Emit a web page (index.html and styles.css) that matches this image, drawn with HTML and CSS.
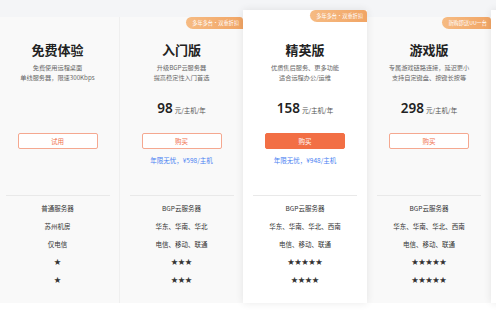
FILE: index.html
```html
<!DOCTYPE html>
<html lang="zh-CN">
<head>
<meta charset="utf-8">
<title>价格方案</title>
<link rel="stylesheet" href="styles.css">
</head>
<body>
<div class="page">
  <div class="topband"></div>
  <div class="row">
    <div class="card">
      <div class="title">免费体验</div>
      <div class="desc">免费使用远程桌面<br>单线服务器，限速300Kbps</div>
      <div class="price"></div>
      <div class="btn">试用</div>
      <div class="promo"></div>
      <div class="divider"></div>
      <div class="features">
        <div class="feat">普通服务器</div>
        <div class="feat">苏州机房</div>
        <div class="feat">仅电信</div>
        <div class="feat stars">★</div>
        <div class="feat stars">★</div>
      </div>
    </div>
    <div class="card">
      <div class="badge">多年多台·双重折扣</div>
      <div class="title">入门版</div>
      <div class="desc">升级BGP云服务器<br>提高稳定性入门首选</div>
      <div class="price"><span class="num">98</span><span class="unit">元/主机/年</span></div>
      <div class="btn">购买</div>
      <div class="promo">年限无忧，¥598/主机</div>
      <div class="divider"></div>
      <div class="features">
        <div class="feat">BGP云服务器</div>
        <div class="feat">华东、华南、华北</div>
        <div class="feat">电信、移动、联通</div>
        <div class="feat stars">★★★</div>
        <div class="feat stars">★★★</div>
      </div>
    </div>
    <div class="card card-active">
      <div class="badge">多年多台·双重折扣</div>
      <div class="title">精英版</div>
      <div class="desc">优质售后服务、更多功能<br>适合远程办公/运维</div>
      <div class="price"><span class="num">158</span><span class="unit">元/主机/年</span></div>
      <div class="btn btn-fill">购买</div>
      <div class="promo">年限无忧，¥948/主机</div>
      <div class="divider"></div>
      <div class="features">
        <div class="feat">BGP云服务器</div>
        <div class="feat">华东、华南、华北、西南</div>
        <div class="feat">电信、移动、联通</div>
        <div class="feat stars">★★★★★</div>
        <div class="feat stars">★★★★</div>
      </div>
    </div>
    <div class="card">
      <div class="badge">新购即送UU一台</div>
      <div class="title">游戏版</div>
      <div class="desc">专属游戏链路连接，延迟更小<br>支持自定键盘、按键长按等</div>
      <div class="price"><span class="num">298</span><span class="unit">元/主机/年</span></div>
      <div class="btn">购买</div>
      <div class="promo"></div>
      <div class="divider"></div>
      <div class="features">
        <div class="feat">BGP云服务器</div>
        <div class="feat">华东、华南、华北、西南</div>
        <div class="feat">电信、移动、联通</div>
        <div class="feat stars">★★★★★</div>
        <div class="feat stars">★★★★★</div>
      </div>
    </div>
    <div class="card card-active card-edge"></div>
  </div>
</div>
</body>
</html>
```
FILE: styles.css
```css
* { box-sizing: border-box; }
html, body {
  margin: 0;
  padding: 0;
  background: #ffffff;
  overflow: hidden;
}
body {
  font-family: "Noto Sans", "Noto Sans CJK SC", sans-serif;
  color: #333;
}
.page {
  width: 496px;
  height: 316px;
  position: relative;
  overflow: hidden;
}
.topband {
  height: 17px;
  background: #f4f5f7;
}
.row {
  display: flex;
  margin-left: -5px;
  width: 640px;
  align-items: flex-end;
}
.card {
  position: relative;
  flex: 0 0 124px;
  width: 124px;
  height: 286px;
  background: #f9f9f9;
  border-left: 1px solid #efefef;
  padding-top: 25px;
  display: flex;
  flex-direction: column;
  align-items: center;
  text-align: center;
}
.card-active {
  background: #ffffff;
  height: 293px;
  margin-top: -7px;
  padding-top: 32px;
  border-left: none;
  box-shadow: 0 0 8px rgba(0, 0, 0, 0.09);
  z-index: 2;
}
.card-active + .card { border-left: none; }
.badge {
  position: absolute;
  top: 0;
  right: 0;
  height: 12px;
  padding: 0 4px 0 6px;
  font-family: "Noto Sans CJK SC", sans-serif;
  font-size: 5.2px;
  line-height: 12px;
  color: #fff;
  background: linear-gradient(90deg, #f6bb83, #f1a565);
  border-radius: 6px 4px 0 8px;
  white-space: nowrap;
}
.title {
  font-family: "Noto Sans CJK SC", sans-serif;
  font-size: 13px;
  line-height: 16px;
  font-weight: 700;
  color: #222;
}
.desc {
  margin-top: 5px;
  font-family: "Noto Sans CJK SC", sans-serif;
  font-size: 6.2px;
  line-height: 10px;
  color: #666;
  height: 20px;
  white-space: nowrap;
}
.price {
  margin-top: 17px;
  height: 16px;
  line-height: 16px;
  display: flex;
  align-items: baseline;
  justify-content: center;
}
.num {
  font-family: "Noto Sans", sans-serif;
  font-size: 13.5px;
  font-weight: 600;
  color: #222;
}
.unit {
  margin-left: 2px;
  font-family: "Noto Sans CJK SC", sans-serif;
  font-size: 6.5px;
  color: #555;
}
.btn {
  margin-top: 17px;
  width: 80px;
  height: 16px;
  border: 1px solid #f5a890;
  border-radius: 2px;
  background: #fff;
  font-family: "Noto Sans CJK SC", sans-serif;
  font-size: 6.5px;
  line-height: 14px;
  color: #f0704c;
}
.btn-fill {
  background: #f26f45;
  border-color: #f26f45;
  color: #fff;
}
.promo {
  margin-top: 6px;
  height: 10px;
  font-family: "Noto Sans CJK SC", sans-serif;
  font-size: 6.5px;
  line-height: 10px;
  color: #4a82f2;
  white-space: nowrap;
}
.divider {
  margin-top: 30px;
  width: 104px;
  height: 1px;
  background: #e9e9e9;
}
.features {
  padding-top: 4px;
  display: flex;
  flex-direction: column;
  align-items: center;
}
.feat {
  height: 17.8px;
  line-height: 17.8px;
  font-family: "Noto Sans CJK SC", sans-serif;
  font-size: 6.5px;
  color: #333;
  white-space: nowrap;
}
.stars {
  font-size: 7px;
  color: #333;
}
.card-edge { padding: 0; }
```
